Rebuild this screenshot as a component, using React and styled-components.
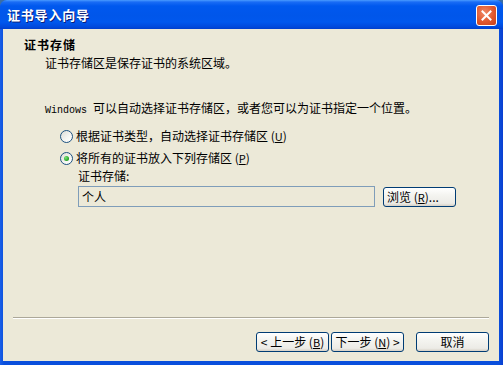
import styled, { createGlobalStyle } from "styled-components";

const GlobalStyle = createGlobalStyle`
  * { box-sizing: border-box; }
  html, body { margin: 0; padding: 0; background: #3a6ea5; }
  body { font-family: "Noto Sans CJK SC", "Liberation Sans", sans-serif; font-size: 12px; }
`;

const Frame = styled.div`
  width: 503px;
  height: 365px;
  display: flex;
  flex-direction: column;
  border-radius: 7px 7px 0 0;
  overflow: hidden;
  background: linear-gradient(90deg, #1a5fe8 0, #0a4fdc 4px, #0a4fdc 499px, #0a3fd0 100%);
  padding: 0 4px 4px 3px;
`;

const TitleBar = styled.div`
  height: 29px;
  margin: 0 -4px 0 -3px;
  padding: 0 6px 0 7px;
  display: flex;
  align-items: center;
  justify-content: space-between;
  background: linear-gradient(180deg, #4a9bff 0, #1a6cf5 2px, #0058ee 6px, #0056ea 16px, #0058ee 22px, #0049dc 27px, #003fcc 100%);
`;

const Title = styled.span`
  color: #fff;
  font-weight: bold;
  font-size: 13px;
  letter-spacing: 0.8px;
  text-shadow: 1px 1px 0 #0a1e7a;
`;

const CloseButton = styled.div`
  width: 21px;
  height: 21px;
  border: 1px solid #fff;
  border-radius: 3px;
  background: radial-gradient(circle at 40% 35%, #f08a68 0, #e0572d 55%, #c8401a 100%);
  display: flex;
  align-items: center;
  justify-content: center;
  margin-top: 1px;
`;

const Client = styled.div`
  flex: 1;
  background: #ece9d8;
  display: flex;
  flex-direction: column;
`;

const Header = styled.div`
  padding: 9px 0 0 21px;
  line-height: 14px;
`;

const HeaderTitle = styled.div`
  font-weight: bold;
  font-size: 12px;
  letter-spacing: 1px;
  color: #000;
`;

const HeaderSub = styled.div`
  margin: 4px 0 0 21px;
  color: #000;
`;

const Body = styled.div`
  padding: 31px 0 0 42px;
  line-height: 14px;
  color: #000;
`;

const Mono = styled.span`
  font-family: "Liberation Mono", monospace;
  font-size: 10px;
  margin-right: 6px;
`;

const Options = styled.div`
  margin: 10px 0 0 15px;
  display: flex;
  flex-direction: column;
  gap: 6px;
`;

const OptionRow = styled.label`
  display: flex;
  align-items: center;
  gap: 3px;
  height: 16px;
`;

const Radio = styled.span`
  width: 13px;
  height: 13px;
  border-radius: 50%;
  border: 1px solid #1c5180;
  background: linear-gradient(135deg, #dcdcd6 0, #f6f6f3 60%, #ffffff 100%);
  display: flex;
  align-items: center;
  justify-content: center;
  &::after {
    content: "";
    display: ${(p) => (p.checked ? "block" : "none")};
    width: 5px;
    height: 5px;
    border-radius: 50%;
    background: radial-gradient(circle at 35% 35%, #7be37b 0, #21a121 70%);
  }
`;

const Key = styled.span`
  text-decoration: underline;
  font-size: 11px;
`;

const StoreBlock = styled.div`
  margin: 3px 0 0 33px;
`;

const StoreRow = styled.div`
  display: flex;
  align-items: center;
  gap: 8px;
  margin-top: 3px;
`;

const TextBox = styled.div`
  width: 297px;
  height: 21px;
  border: 1px solid #7f9db9;
  background: #ece9d8;
  padding: 2px 3px;
  line-height: 15px;
`;

const Button = styled.div`
  width: ${(p) => p.w || 73}px;
  height: 20px;
  border: 1px solid #003c74;
  border-radius: 3px;
  background: linear-gradient(180deg, #ffffff 0, #f4f4f0 40%, #ecebe6 85%, #d6d0c5 100%);
  display: flex;
  align-items: center;
  justify-content: ${(p) => p.align || "center"};
  padding: 0 3px;
  line-height: 14px;
  color: #000;
  white-space: nowrap;
`;

const Separator = styled.div`
  margin: auto 10px 0 10px;
  height: 2px;
  border-top: 1px solid #aca899;
  border-bottom: 1px solid #fff;
`;

const Footer = styled.div`
  display: flex;
  justify-content: flex-end;
  padding: 13px 10px 9px 0;
`;

const NavPair = styled.div`
  display: flex;
  gap: 2px;
  margin-right: 12px;
`;

export default function App() {
  return (
    <>
      <GlobalStyle />
      <Frame>
        <TitleBar>
          <Title>证书导入向导</Title>
          <CloseButton>
            <svg width="11" height="11" viewBox="0 0 11 11">
              <path d="M1.5 1.5 L9.5 9.5 M9.5 1.5 L1.5 9.5" stroke="#fff" strokeWidth="2" strokeLinecap="square" />
            </svg>
          </CloseButton>
        </TitleBar>
        <Client>
          <Header>
            <HeaderTitle>证书存储</HeaderTitle>
            <HeaderSub>证书存储区是保存证书的系统区域。</HeaderSub>
          </Header>
          <Body>
            <div>
              <Mono>Windows</Mono>可以自动选择证书存储区，或者您可以为证书指定一个位置。
            </div>
            <Options>
              <OptionRow>
                <Radio />
                <span>
                  根据证书类型，自动选择证书存储区 (<Key>U</Key>)
                </span>
              </OptionRow>
              <OptionRow>
                <Radio checked />
                <span>
                  将所有的证书放入下列存储区 (<Key>P</Key>)
                </span>
              </OptionRow>
            </Options>
            <StoreBlock>
              <div>证书存储:</div>
              <StoreRow>
                <TextBox>个人</TextBox>
                <Button w={73} align="flex-start">
                  浏览 (<Key>R</Key>)...
                </Button>
              </StoreRow>
            </StoreBlock>
          </Body>
          <Separator />
          <Footer>
            <NavPair>
              <Button w={73}>
                &lt; 上一步 (<Key>B</Key>)
              </Button>
              <Button w={73}>
                下一步 (<Key>N</Key>) &gt;
              </Button>
            </NavPair>
            <Button w={73}>取消</Button>
          </Footer>
        </Client>
      </Frame>
    </>
  );
}
